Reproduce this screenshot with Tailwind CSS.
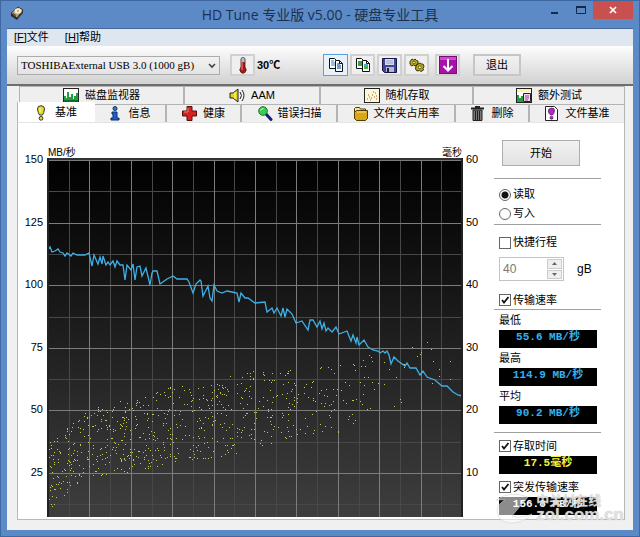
<!DOCTYPE html>
<html lang="zh-CN">
  <head>
    <meta charset="UTF-8" />
    <meta name="viewport" content="width=device-width, initial-scale=1.0" />
    <title>HD Tune 专业版 v5.00 - 硬盘专业工具</title>
    <script src="https://cdn.jsdelivr.net/npm/@tailwindcss/browser@4"></script>
  </head>
  <body class="bg-[#5b8ac6] font-['Liberation_Sans','Noto_Sans_CJK_SC',sans-serif] text-[11px] text-black">
    <div class="min-h-screen flex flex-col border border-[#3f68a0] px-[6px] pb-[6px]">
      <!-- Title bar -->
      <header class="relative h-[27px] flex items-center justify-center">
        <svg class="absolute left-[2px] top-[4px]" width="16" height="16" viewBox="0 0 16 16">
          <path d="M2 8 9 2l5 3-6 8z" fill="#b9a07a" stroke="#3c342e" />
          <path d="M2 8v3l6 4v-2z" fill="#2a2622" />
          <path d="m8 13 6-8v3l-6 7z" fill="#3e362e" />
          <ellipse cx="9" cy="6" rx="3.500" ry="2.700" fill="#f6ead0" />
          <circle cx="9" cy="6" r="1" fill="#b9a07a" />
          <path d="m4 8 3 2-1 2-3-3z" fill="#5b4c3c" />
        </svg>
        <h1 class="font-['Open_Sans','Noto_Sans_CJK_SC',sans-serif] text-[14px] leading-5 text-[#1c3050]">HD Tune 专业版 v5.00 - 硬盘专业工具</h1>
        <div class="absolute right-0 top-0 flex h-[18px]">
          <button class="w-7 grid place-items-center" aria-label="最小化">
            <svg width="8" height="8" viewBox="0 0 8 8"><path d="M0 6h7v2H0z" fill="#14294a" /></svg>
          </button>
          <button class="w-6 grid place-items-center" aria-label="最大化">
            <svg width="10" height="8" viewBox="0 0 10 8"><path d="M.5 1h9v6.500h-9z" fill="none" stroke="#14294a" /><path d="M0 0h10v2H0z" fill="#14294a" /></svg>
          </button>
          <button class="w-10 bg-[#c8504f] grid place-items-center" aria-label="关闭">
            <svg width="8" height="8" viewBox="0 0 8 8"><path d="m1 1 6 6m0-6L1 7" stroke="#fff" stroke-width="1.700" /></svg>
          </button>
        </div>
      </header>

      <div class="flex-1 flex flex-col border-t border-[#47699a] bg-[#f0f0f0]">
        <!-- Menu -->
        <nav class="flex h-[17px] items-center gap-4 bg-[#dee6ef] px-[7px] text-[11px]">
          <a href="#">[<u>F</u>]文件</a>
          <a href="#">[<u>H</u>]帮助</a>
        </nav>

        <!-- Toolbar -->
        <div class="flex h-[38px] items-center bg-linear-to-b from-[#fdfdfd] to-[#d2d2d2] pl-[10px]">
          <div class="relative w-[203px]">
            <select aria-label="硬盘" class="h-[19px] w-full appearance-none border border-[#acacac] bg-linear-to-b from-[#f2f2f2] to-[#e4e4e4] pl-[3px] font-['Liberation_Serif',serif] text-[11px]">
              <option>TOSHIBAExternal USB 3.0 (1000 gB)</option>
            </select>
            <svg class="pointer-events-none absolute right-[4px] top-[7px]" width="8" height="6" viewBox="0 0 8 6"><path d="m1 1 3 3 3-3" fill="none" stroke="#444" stroke-width="1.600" /></svg>
          </div>
          <button class="ml-[10px] h-[22px] w-[25px] grid place-items-center border-2 border-[#d0d0d0] bg-[#efefef]" aria-label="温度">
            <svg width="12" height="18" viewBox="0 0 12 18">
              <path d="M4 2.500q2-2 4 0V11q2.500 3 0 5.500-2 1.500-4 0-2.500-2.500 0-5.500z" fill="#b01414" stroke="#4d2020" stroke-width=".8" />
              <path d="M4.400 2.500q1.600-1.500 3.200 0V6H4.400z" fill="#9cc8d4" />
              <path d="M5 6v8" stroke="#ff8a80" />
            </svg>
          </button>
          <span class="ml-[2px] w-[66px] font-bold">30℃</span>
          <div class="flex gap-[2px]">
            <button class="h-[22px] w-[25px] grid place-items-center border border-[#5a9fe0] bg-[#e8f1fa]" aria-label="复制文本">
              <svg width="16" height="16" viewBox="0 0 16 16">
                <path d="M1.500 1.500h5l2 2v8h-7z" fill="#fff" stroke="#111" />
                <path d="M3 4h3M3 6h4M3 8h4" stroke="#3b7cc9" />
                <path d="M7.500 3.500h4l3 3v8h-7z" fill="#fff" stroke="#111" />
                <path d="M9 7h3M9 9h4M9 11h4" stroke="#3b7cc9" stroke-width="1.300" /><path d="M11.500 3.500v3h3" fill="none" stroke="#111" />
              </svg>
            </button>
            <button class="h-[22px] w-[25px] grid place-items-center border-2 border-[#d0d0d0] bg-[#efefef]" aria-label="复制截图">
              <svg width="16" height="16" viewBox="0 0 16 16">
                <path d="M1.500 1.500h5l2 2v8h-7z" fill="#fff" stroke="#111" />
                <path d="M3 4h4v5H3z" fill="#3f9d4a" />
                <path d="M7.500 3.500h4l3 3v8h-7z" fill="#fff" stroke="#111" />
                <path d="M9 7h4v5H9z" fill="#43b04d" /><path d="M9 7h4v2H9z" fill="#5b9fd8" /><path d="M11.500 3.500v3h3" fill="none" stroke="#111" />
              </svg>
            </button>
            <button class="h-[22px] w-[25px] grid place-items-center border-2 border-[#d0d0d0] bg-[#efefef]" aria-label="保存">
              <svg width="15" height="15" viewBox="0 0 15 15">
                <path d="M.5.500h14v14h-12l-2-2z" fill="#434393" stroke="#15154a" />
                <path d="M3 1h9v6H3z" fill="#d5dcec" /><path d="M4 3h7M4 5h7" stroke="#8994b8" stroke-width=".8" />
                <path d="M4 9h8v5H4z" fill="#b8b8c8" /><path d="M5 10h2v4H5z" fill="#1b1b45" />
              </svg>
            </button>
            <button class="h-[22px] w-[25px] grid place-items-center border-2 border-[#d0d0d0] bg-[#efefef]" aria-label="选项">
              <svg width="16" height="15" viewBox="0 0 16 15">
                <g stroke="#39350a" stroke-width="1" fill="#b8a91c">
                  <path d="m3 1 1.500 1L6 1l1.500 1.500L9 3v2l-1 1.500L6 8 4.500 7 2.500 8 1 6V3.500z" />
                  <path d="m9 6 2-1 1.500 1L14 6l1 2.500-1 2 .5 1.500-2.500 1.500-1.500-1L8 13l-1.500-2L7 8z" />
                </g>
                <circle cx="5" cy="4.500" r="1.300" fill="#fff2a0" stroke="#39350a" stroke-width=".7" />
                <circle cx="10.800" cy="9.300" r="1.500" fill="#fff2a0" stroke="#39350a" stroke-width=".7" />
              </svg>
            </button>
          </div>
          <button class="ml-[6px] h-[22px] w-[25px] grid place-items-center border-2 border-[#d0d0d0] bg-[#efefef]" aria-label="更新">
            <svg width="18" height="18" viewBox="0 0 18 18">
              <rect x=".5" y=".5" width="17" height="17" fill="#a812a8" stroke="#7c087c" />
              <path d="M1 1h16v3H1z" fill="#c94fc9" />
              <path d="M9 3v11M4.500 10 9 14.500 13.500 10" fill="none" stroke="#fff" stroke-width="2" />
            </svg>
          </button>
          <button class="ml-[13px] h-[22px] w-[48px] border-2 border-[#c6c6c6] bg-linear-to-b from-[#f1f1f1] to-[#e4e4e4] leading-4">退出</button>
        </div>

        <!-- Tabs -->
        <main class="flex-1 border-t-2 border-[#6e6e6e] pl-[10px] pr-[8px] pb-[10px]">
          <div class="ml-[2px] grid h-[18px] grid-cols-[165fr_136fr_153fr_151fr] border-t border-l border-[#b4b4b4] bg-[#efefef]">
            <button class="flex items-center justify-center gap-[6px] border-r-2 border-[#b4b4b4]">
              <svg width="16" height="15" viewBox="0 0 16 15"><rect x=".5" y=".5" width="15" height="14" fill="#fff" stroke="#222" /><path d="M1 14V8h2v2h1V4h2v5h2V6h2v5h1V8h2V5h2v9z" fill="#22a040" /><path d="M1 12h14v2H1z" fill="#0c6e2c" /></svg>
              磁盘监视器
            </button>
            <button class="flex items-center justify-center gap-[6px] border-r-2 border-[#b4b4b4]">
              <svg width="16" height="15" viewBox="0 0 16 15"><path d="M1 5h3l5-4v13L4 10H1z" fill="#e2d21a" stroke="#222" /><path d="M11 4q3 3.500 0 7M13 2q4 5.500 0 11" fill="none" stroke="#222" /><path d="M6 4v7" stroke="#fffaa0" /></svg>
              AAM
            </button>
            <button class="flex items-center justify-center gap-[6px] border-r-2 border-[#b4b4b4]">
              <svg width="16" height="15" viewBox="0 0 16 15"><rect x=".5" y=".5" width="15" height="14" fill="#fff8d8" stroke="#222" /><path d="M3 11h1M5 9h1M4 7h1M7 10h1M8 7h1M10 9h1M11 5h1M12 8h1M6 12h1M9 4h1M12 11h1" stroke="#b0561e" stroke-width="1.200" /></svg>
              随机存取
            </button>
            <button class="flex items-center justify-center gap-[6px] border-r border-[#b4b4b4]">
              <svg width="16" height="15" viewBox="0 0 16 15"><rect x=".5" y=".5" width="15" height="14" fill="#fff" stroke="#222" /><path d="M1 1h14v3H1z" fill="#fff3a8" /><path d="M1 14V7h2v3h2V8h2v6z" fill="#22a040" /><path d="M7.500 5.500h7v8h-7z" fill="#f2d8ec" stroke="#222" /><path d="M9 8h4M9 10h4M9 12h3" stroke="#a03c8c" /></svg>
              额外测试
            </button>
          </div>
          <div class="grid h-[18px] grid-cols-[78fr_72fr_75fr_96fr_118fr_74fr_95fr] bg-[#efefef]">
            <button class="relative -mt-[2px] -mb-[1px] flex items-center justify-center gap-[9px] border-l border-[#b4b4b4] bg-white">
              <svg width="10" height="16" viewBox="0 0 10 16"><path d="M5 .700Q8.500.700 8.500 4 8 8 6.500 10h-3Q2 8 1.500 4 1.500.700 5 .700z" fill="#e6dc28" stroke="#333" /><circle cx="5" cy="13.300" r="1.900" fill="#e6dc28" stroke="#333" /><path d="M4 3v4" stroke="#fffbc0" /></svg>
              基准
            </button>
            <button class="flex items-center justify-center gap-[9px] border-t border-r-2 border-[#b4b4b4]">
              <svg width="10" height="15" viewBox="0 0 10 15"><circle cx="5" cy="2.500" r="2" fill="#2c7fe0" stroke="#0d2a60" /><path d="M2 6h5v6h2v2H1v-2h2V8H2z" fill="#1c62d0" stroke="#0d2a60" /></svg>
              信息
            </button>
            <button class="flex items-center justify-center gap-[6px] border-t border-r-2 border-[#b4b4b4]">
              <svg width="15" height="15" viewBox="0 0 15 15"><path d="M5 .500h5V5h4.500v5H10v4.500H5V10H.5V5H5z" fill="#d42222" stroke="#5c0c0c" /><path d="M6 2v4H2" fill="none" stroke="#f08080" /></svg>
              健康
            </button>
            <button class="flex items-center justify-center gap-[5px] border-t border-r-2 border-[#b4b4b4]">
              <svg width="16" height="15" viewBox="0 0 16 15"><path d="m9 8 5 5.500" stroke="#15206e" stroke-width="3" stroke-linecap="round" /><circle cx="6" cy="5" r="4.300" fill="#38cf50" stroke="#157528" /><path d="M3.500 4.500q1-2 3-2" fill="none" stroke="#c8ffd0" /></svg>
              错误扫描
            </button>
            <button class="flex items-center justify-center gap-[6px] border-t border-r-2 border-[#b4b4b4]">
              <svg width="15" height="15" viewBox="0 0 15 15"><path d="M1.500 13V2.500l1-1h4l1 1.500h5v2" fill="#f5e39a" stroke="#4d3c08" /><path d="M3.500 4.500h11v8l-2 2h-9l-2-2v-6z" fill="#d8a616" stroke="#4d3c08" /><path d="M4 6h9" stroke="#ffe678" /></svg>
              文件夹占用率
            </button>
            <button class="flex items-center justify-center gap-[8px] border-t border-r-2 border-[#b4b4b4]">
              <svg width="13" height="15" viewBox="0 0 13 15"><path d="M2 4h9v10.500H2z" fill="#777" stroke="#222" /><path d="M4.500 5v9M6.500 5v9M8.500 5v9" stroke="#222" /><path d="M0 2.500h13M4 1h5" stroke="#222" stroke-width="1.800" /></svg>
              删除
            </button>
            <button class="flex items-center justify-center gap-[8px] border-t border-r border-[#b4b4b4]">
              <svg width="13" height="15" viewBox="0 0 13 15"><path d="M.5.500h9l3 3v11H.5z" fill="#fff" stroke="#222" /><path d="M6.500 2Q10 2 9.500 5T7.500 9h-2Q3.500 7.500 3.300 5T6.500 2z" fill="#b028c4" stroke="#501060" stroke-width=".7" /><circle cx="6.500" cy="11.700" r="1.500" fill="#b028c4" stroke="#501060" stroke-width=".7" /></svg>
              文件基准
            </button>
          </div>

          <!-- Benchmark panel -->
          <section class="relative flex border border-t-0 border-[#b8b8b8] bg-white pb-[2px] shadow-[inset_0_1px_0_#e4e4e4]">
            <ul class="mt-[31px] flex h-[325px] w-[29px] flex-col justify-between pr-[4px] text-right text-[11px] leading-3">
              <li>150</li><li>125</li><li>100</li><li>75</li><li>50</li><li>25</li>
            </ul>
            <div class="min-w-0 flex-1">
              <div class="flex h-[36px] items-end justify-between px-px text-[10px] leading-[10px]"><span>MB/秒</span><span>毫秒</span></div>
              <svg id="chart" class="block h-[359px] w-full" viewBox="0 0 416 359" preserveAspectRatio="none">
                <defs>
                  <linearGradient id="bg" x1="0" y1="0" x2="0" y2="1">
                    <stop offset="0" stop-color="#000" /><stop offset=".35" stop-color="#151515" /><stop offset="1" stop-color="#3e3e3e" />
                  </linearGradient>
                </defs>
                <rect width="416" height="359" fill="url(#bg)" />
                <g id="grid" shape-rendering="crispEdges"></g>
                <g id="dots" fill="#c9c94a" shape-rendering="crispEdges"></g>
                <polyline fill="none" stroke="#3fb0e6" stroke-width="1.300" points="1,92 3,89 5,94 8,93 11,91 13,94 16,95 18,98 20,95 24,98 26,95 30,97 38,97 42,95 45,108 47,97 51,106 53,99 55,106 56,98 59,107 61,104 63,107 66,103 68,109 70,103 73,107 76,107 78,122 80,107 84,112 86,106 88,122 90,109 93,108 95,118 99,110 103,127 105,115 106,113 110,113 113,126 120,121 126,118 130,121 140,121 142,124 146,135 149,126 153,122 154,123 156,138 161,128 163,140 165,143 167,127 170,133 175,135 180,133 185,134 190,135 192,144 194,135 198,140 201,140 208,145 218,144 220,154 225,150 227,155 230,150 234,158 236,150 238,159 240,151 245,156 249,165 255,163 261,172 263,162 266,162 270,169 273,163 275,171 277,165 279,173 281,170 285,174 289,169 292,176 300,173 304,183 306,177 309,185 310,179 312,187 317,182 321,189 326,192 331,193 333,195 336,193 338,195 340,193 342,197 344,206 347,199 351,203 358,208 360,205 363,210 369,210 373,217 376,213 380,219 388,222 395,228 400,228 406,234 411,237 415,238" />
                <path d="M0 1h416" stroke="#333" stroke-width="2" />
                <path d="M1 0v359M415 0v359" stroke="#222" stroke-width="2" />
              </svg>
            </div>
            <ul class="mt-[31px] flex h-[325px] w-[31px] flex-col justify-between pl-[3px] text-[11px] leading-3">
              <li>60</li><li>50</li><li>40</li><li>30</li><li>20</li><li>10</li>
            </ul>

            <form class="mr-[23px] w-[107px] pt-[18px]">
              <button type="button" class="ml-[8px] block h-[26px] w-[78px] border border-[#adadad] bg-linear-to-b from-[#f2f2f2] to-[#e2e2e2] leading-4">开始</button>
              <hr class="mt-[12px] border-[#a0a0a0]" />
              <div class="mt-[6px] mb-px pl-[5px]">
                <label class="flex h-[19px] items-center gap-[2px]">
                  <input type="radio" name="mode" checked class="size-3 appearance-none rounded-full border border-[#666] bg-white checked:bg-[radial-gradient(circle,#111_3px,#fff_4px)]" />读取
                </label>
                <label class="flex h-[19px] items-center gap-[2px]">
                  <input type="radio" name="mode" class="size-3 appearance-none rounded-full border border-[#666] bg-white checked:bg-[radial-gradient(circle,#111_3px,#fff_4px)]" />写入
                </label>
              </div>
              <hr class="border-[#a0a0a0]" />
              <label class="mt-[8px] flex h-[19px] items-center gap-[2px] pl-[5px]">
                <input type="checkbox" class="size-3 appearance-none border border-[#666] bg-white" />快捷行程
              </label>
              <div class="mt-[5px] flex items-center gap-[13px] pl-[5px]">
                <div class="flex h-[24px] w-[65px] border border-[#c4c4c4] p-px">
                  <input type="number" value="40" disabled aria-label="快捷行程容量" class="min-w-0 flex-1 appearance-none pl-[2px] text-[12px] text-[#777] [&::-webkit-inner-spin-button]:appearance-none" />
                  <div class="flex w-[15px] flex-col gap-px">
                    <button type="button" aria-label="增加" class="grid flex-1 place-items-center border border-[#ccc] bg-[#efefef]"><svg width="5" height="3" viewBox="0 0 5 3"><path d="M0 3 2.500 0 5 3z" fill="#666" /></svg></button>
                    <button type="button" aria-label="减少" class="grid flex-1 place-items-center border border-[#ccc] bg-[#efefef]"><svg width="5" height="3" viewBox="0 0 5 3"><path d="M0 0 2.500 3 5 0z" fill="#666" /></svg></button>
                  </div>
                </div>
                <span class="text-[12px]">gB</span>
              </div>
              <label class="mt-[10px] flex h-[18px] items-center gap-[2px] pl-[5px]">
                <span class="grid">
                  <input type="checkbox" checked class="peer col-start-1 row-start-1 size-3 appearance-none border border-[#666] bg-white" />
                  <svg class="pointer-events-none invisible col-start-1 row-start-1 peer-checked:visible" width="12" height="12" viewBox="0 0 12 12"><path d="m3 6 2 2.500L9.500 3" fill="none" stroke="#111" stroke-width="1.800" /></svg>
                </span>传输速率
              </label>
              <hr class="border-[#a0a0a0]" />
              <dl class="pr-[4px] pl-[5px]">
                <dt class="h-5 leading-5">最低</dt>
                <dd class="h-[18px] bg-black text-center font-['Liberation_Mono','Noto_Sans_CJK_SC',monospace] text-[11px] leading-[14px] font-bold text-[#35b0ee]">55.6 MB/秒</dd>
                <dt class="h-5 leading-5">最高</dt>
                <dd class="h-[18px] bg-black text-center font-['Liberation_Mono','Noto_Sans_CJK_SC',monospace] text-[11px] leading-[14px] font-bold text-[#35b0ee]">114.9 MB/秒</dd>
                <dt class="h-5 leading-5">平均</dt>
                <dd class="h-[18px] bg-black text-center font-['Liberation_Mono','Noto_Sans_CJK_SC',monospace] text-[11px] leading-[14px] font-bold text-[#35b0ee]">90.2 MB/秒</dd>
              </dl>
              <hr class="mt-[8px] border-[#a0a0a0]" />
              <div class="pr-[4px] pl-[5px]">
                <label class="mt-[3px] flex h-5 items-center gap-[2px]">
                  <span class="grid">
                    <input type="checkbox" checked class="peer col-start-1 row-start-1 size-3 appearance-none border border-[#666] bg-white" />
                    <svg class="pointer-events-none invisible col-start-1 row-start-1 peer-checked:visible" width="12" height="12" viewBox="0 0 12 12"><path d="m3 6 2 2.500L9.500 3" fill="none" stroke="#111" stroke-width="1.800" /></svg>
                  </span>存取时间
                </label>
                <p class="h-[18px] bg-black text-center font-['Liberation_Mono','Noto_Sans_CJK_SC',monospace] text-[11px] leading-[14px] font-bold text-[#f4f43c]">17.5毫秒</p>
                <label class="mt-[3px] flex h-5 items-center gap-[2px]">
                  <span class="grid">
                    <input type="checkbox" checked class="peer col-start-1 row-start-1 size-3 appearance-none border border-[#666] bg-white" />
                    <svg class="pointer-events-none invisible col-start-1 row-start-1 peer-checked:visible" width="12" height="12" viewBox="0 0 12 12"><path d="m3 6 2 2.500L9.500 3" fill="none" stroke="#111" stroke-width="1.800" /></svg>
                  </span>突发传输速率
                </label>
                <p class="h-[18px] bg-black text-center font-['Liberation_Mono','Noto_Sans_CJK_SC',monospace] text-[11px] leading-[14px] font-bold text-white">156.8 MB/秒</p>
              </div>
            </form>

            <!-- Watermark -->
            <div class="pointer-events-none absolute right-0 -bottom-[5px] flex items-center gap-[2px] text-white/60 [text-shadow:0_0_1px_#aaa]">
              <svg width="42" height="32" viewBox="0 0 42 32"><path d="M4 8Q18-2 36 5L20 24q8 3 20-2Q32 31 19 31 5 30 5 19q0-7 8-11z" fill="#fff" fill-opacity=".55" stroke="#ccc" stroke-opacity=".5" /></svg>
              <div class="font-bold">
                <p class="text-[13px] leading-[14px]">中关村在线</p>
                <p class="text-[17px] leading-[14px]">zol.com.cn</p>
              </div>
            </div>
          </section>
        </main>
      </div>
    </div>

    <script>
      const NS = "http://www.w3.org/2000/svg";

      function addRect(parent, x, y, w, h, fill) {
        const r = document.createElementNS(NS, "rect");
        r.setAttribute("x", x);
        r.setAttribute("y", y);
        r.setAttribute("width", w);
        r.setAttribute("height", h);
        if (fill) r.setAttribute("fill", fill);
        parent.appendChild(r);
      }

      // grid: minor lines first so the major ones stay on top
      const grid = document.getElementById("grid");
      for (const major of [false, true]) {
        const color = major ? "#7c7c7c" : "#484848";
        for (let i = 0; i <= 20; i++) {
          if ((i % 2 === 0) === major) addRect(grid, Math.round(1 + i * 20.7), 0, 1, 359, color);
        }
        for (let i = 0; i <= 11; i++) {
          if ((i % 2 === 0) === major) addRect(grid, 0, Math.round(2 + i * 31.3), 416, 1, color);
        }
      }

      // access times: [x, top, bottom, samples up to the next stop]
      const bands = [
        [1, 283, 354, 130], [42, 252, 318, 125], [84, 238, 314, 115], [125, 228, 308, 95],
        [167, 220, 300, 95], [208, 212, 290, 80], [250, 211, 280, 48], [291, 207, 274, 30],
        [322, 195, 264, 16], [360, 190, 246, 8], [388, 172, 226, 4], [415, 170, 220, 0],
      ];
      let seed = 17;
      function rnd() {
        seed = (seed * 16807) % 2147483647;
        return seed / 2147483647;
      }
      const dots = document.getElementById("dots");
      for (let b = 0; b < bands.length - 1; b++) {
        const [x0, t0, b0, n] = bands[b];
        const [x1, t1, b1] = bands[b + 1];
        for (let i = 0; i < n; i++) {
          const k = rnd();
          const top = t0 + (t1 - t0) * k;
          const bottom = b0 + (b1 - b0) * k;
          addRect(dots, Math.round(x0 + (x1 - x0) * k), Math.round(top + (bottom - top) * rnd()), 1, 1);
        }
      }
    </script>
  </body>
</html>
